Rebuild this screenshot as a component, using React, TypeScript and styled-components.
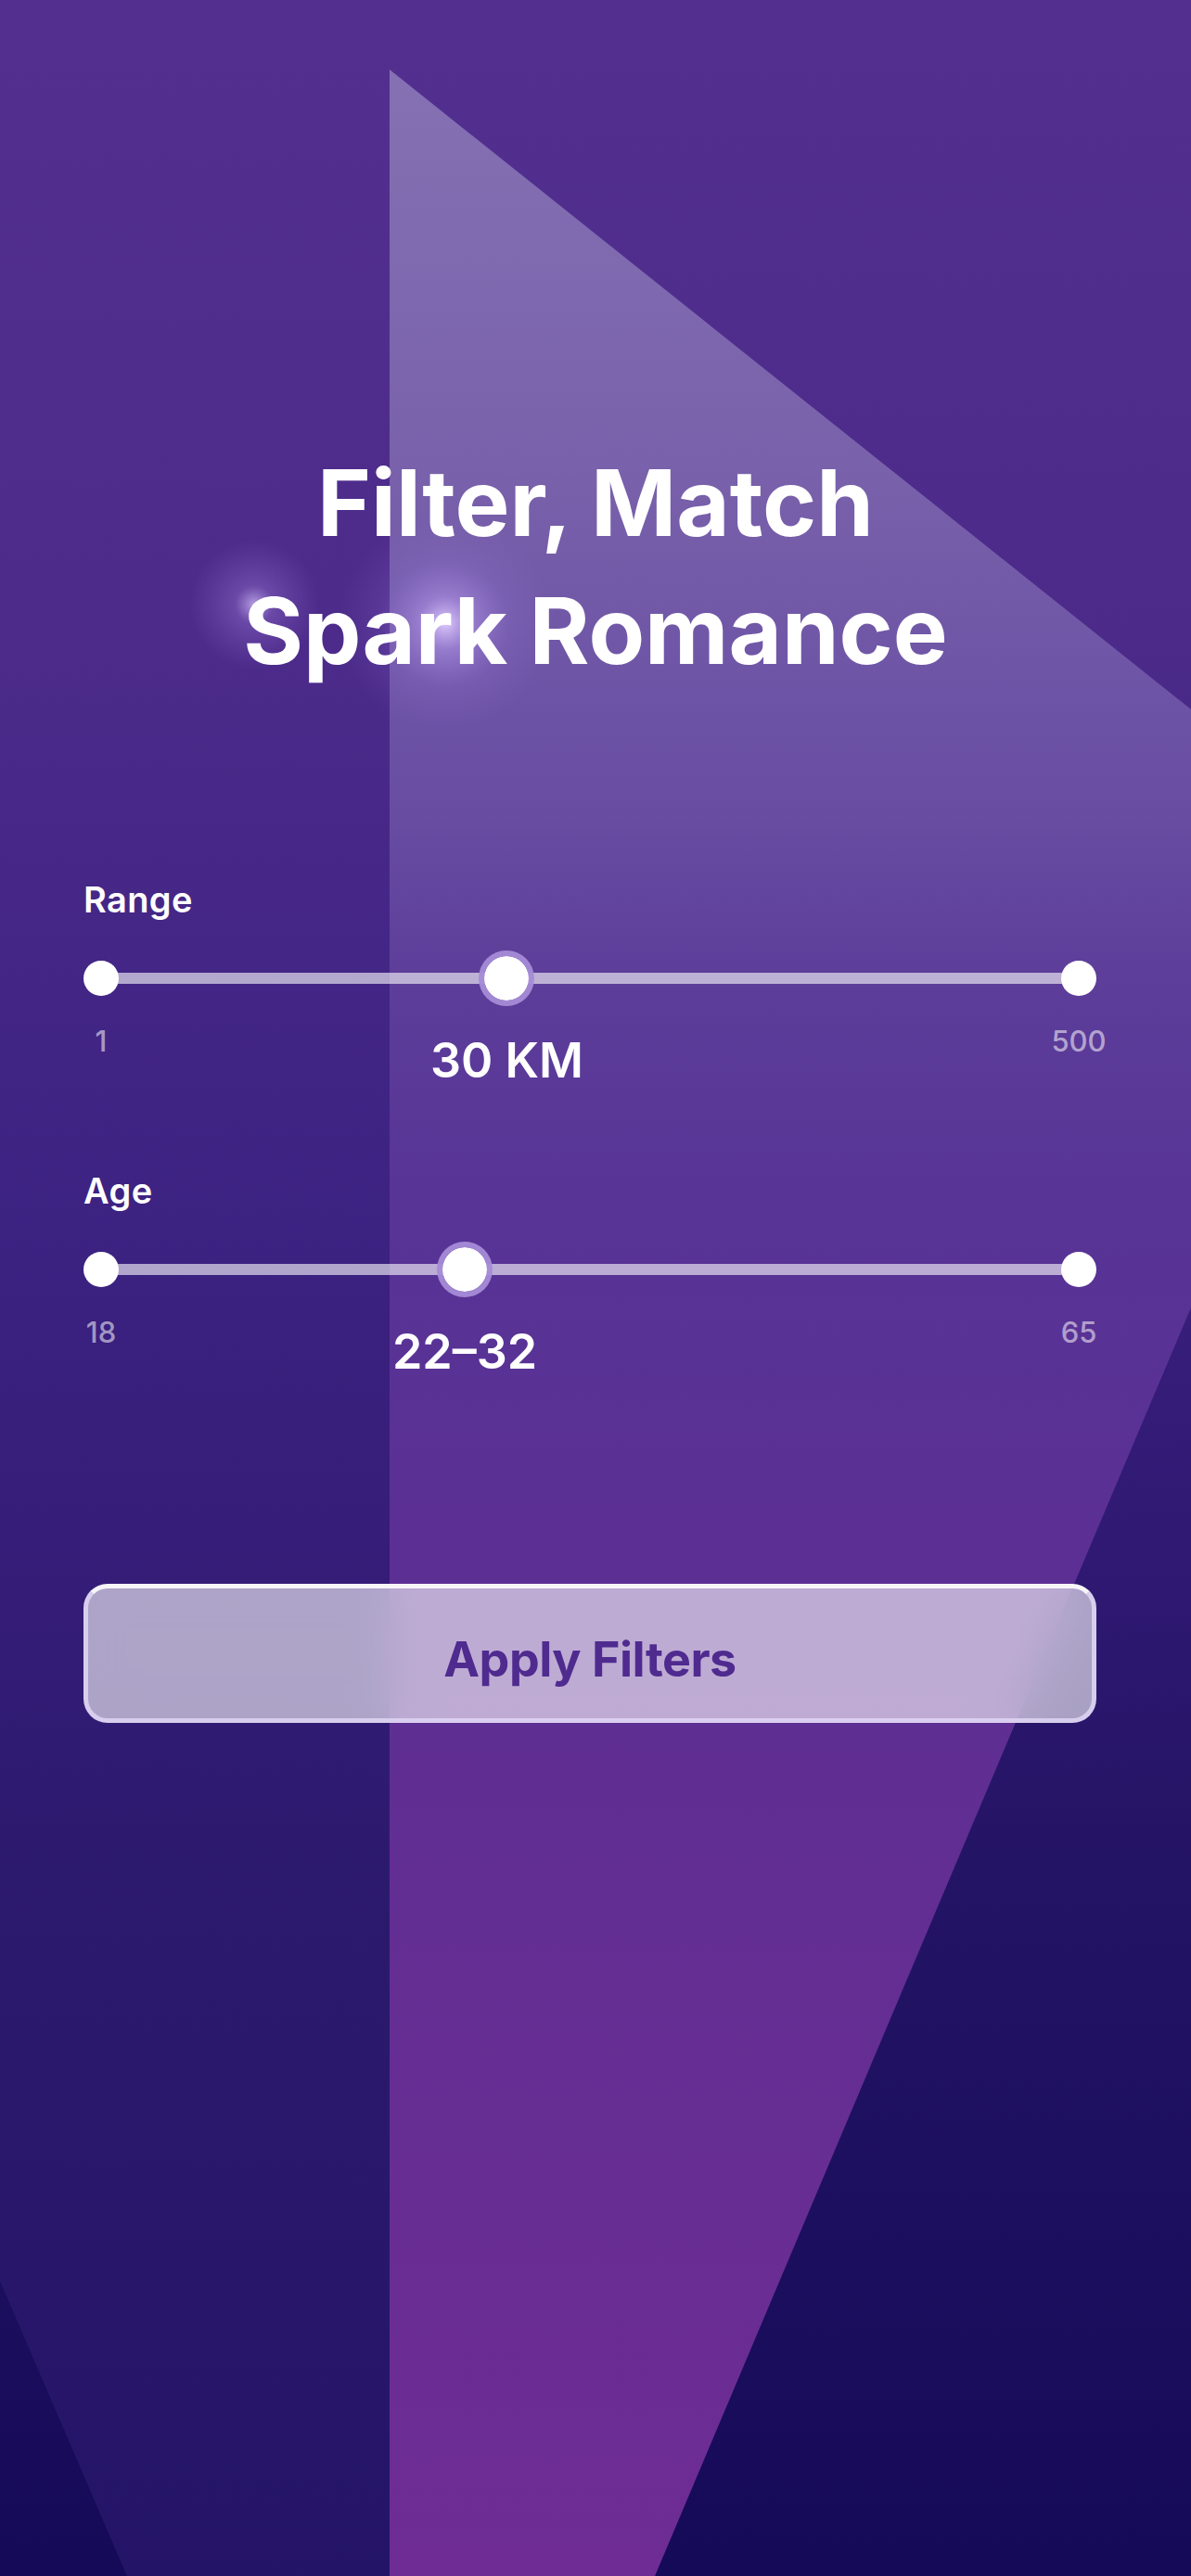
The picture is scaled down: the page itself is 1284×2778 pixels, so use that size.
import * as React from "react";
import styled, { createGlobalStyle } from "styled-components";

type SliderData = {
  label: string;
  min: string;
  max: string;
  value: string;
  pos: number;
};

const sliders: SliderData[] = [
  { label: "Range", min: "1", max: "500", value: "30 KM", pos: 0.415 },
  { label: "Age", min: "18", max: "65", value: "22–32", pos: 0.372 },
];

const GlobalStyle = createGlobalStyle`
  html, body {
    margin: 0;
    padding: 0;
    background: #150a58;
  }
  * {
    box-sizing: border-box;
  }
`;

const Backdrop = () => (
  <BackdropSvg viewBox="0 0 1284 2778" preserveAspectRatio="none">
    <defs>
      <linearGradient id="beamMain" x1="0" y1="75" x2="0" y2="2778" gradientUnits="userSpaceOnUse">
        <stop offset="0" stopColor="#8571b3" />
        <stop offset="0.16" stopColor="#7961ab" />
        <stop offset="0.3" stopColor="#674ca2" />
        <stop offset="0.36" stopColor="#5d3e9a" />
        <stop offset="0.45" stopColor="#573496" />
        <stop offset="0.6" stopColor="#5c2f94" />
        <stop offset="0.72" stopColor="#622e93" />
        <stop offset="1" stopColor="#6e2c94" />
      </linearGradient>
      <linearGradient id="beamLeft" x1="0" y1="0" x2="0" y2="2778" gradientUnits="userSpaceOnUse">
        <stop offset="0" stopColor="#8a5ad2" stopOpacity="0" />
        <stop offset="0.4" stopColor="#8a5ad2" stopOpacity="0.03" />
        <stop offset="1" stopColor="#8a5ad2" stopOpacity="0.13" />
      </linearGradient>
      <radialGradient id="glowBig">
        <stop offset="0" stopColor="#e2d0ff" stopOpacity="0.95" />
        <stop offset="0.25" stopColor="#bda0f4" stopOpacity="0.5" />
        <stop offset="0.6" stopColor="#a283e6" stopOpacity="0.15" />
        <stop offset="1" stopColor="#9c7ae0" stopOpacity="0" />
      </radialGradient>
      <radialGradient id="glowSmall">
        <stop offset="0" stopColor="#dcc8ff" stopOpacity="0.75" />
        <stop offset="0.3" stopColor="#ad8de8" stopOpacity="0.3" />
        <stop offset="1" stopColor="#9c7ae0" stopOpacity="0" />
      </radialGradient>
    </defs>
    <polygon points="0,0 420,0 420,2778 137,2778 0,2460" fill="url(#beamLeft)" />
    <polygon points="420,75 1284,765 1284,1410 706,2778 420,2778" fill="url(#beamMain)" />
    <circle cx="480" cy="672" r="115" fill="url(#glowBig)" />
    <circle cx="274" cy="652" r="70" fill="url(#glowSmall)" />
  </BackdropSvg>
);

const Slider = ({ data }: { data: SliderData }) => {
  const center = `calc(19px + ${data.pos} * (100% - 38px))`;
  return (
    <SliderBlock>
      <SliderLabel>{data.label}</SliderLabel>
      <Track>
        <RailRow>
          <EndDot />
          <Rail />
          <EndDot />
        </RailRow>
        <Thumb style={{ marginLeft: `calc(${center} - 30px)` }} />
      </Track>
      <Scale>
        <Ticks>
          <Tick>
            <span>{data.min}</span>
          </Tick>
          <Tick>
            <span>{data.max}</span>
          </Tick>
        </Ticks>
        <Value style={{ marginLeft: center }}>{data.value}</Value>
      </Scale>
    </SliderBlock>
  );
};

const App = () => {
  return (
    <>
      <GlobalStyle />
      <Page>
        <Backdrop />
        <Content>
          <Title>
            Filter, Match
            <br />
            Spark Romance
          </Title>
          {sliders.map((s) => (
            <Slider key={s.label} data={s} />
          ))}
          <ApplyButton>Apply Filters</ApplyButton>
        </Content>
      </Page>
    </>
  );
};

export default App;

const Page = styled.main`
  position: relative;
  width: 1284px;
  min-height: 2778px;
  overflow: hidden;
  background: linear-gradient(
    180deg,
    #53308f 0%,
    #4b2a89 25%,
    #3b2180 45%,
    #2e1871 62%,
    #241465 72%,
    #150a58 100%
  );
  font-family: Inter, "Noto Sans", sans-serif;
  color: #fff;
`;

const BackdropSvg = styled.svg`
  position: absolute;
  inset: 0;
  width: 100%;
  height: 100%;
  z-index: 0;
`;

const Content = styled.div`
  position: relative;
  z-index: 1;
  display: flex;
  flex-direction: column;
  padding: 473px 102px 0 90px;
`;

const Title = styled.h1`
  margin: 0 -102px 199px -90px;
  font-size: 99px;
  font-weight: 700;
  line-height: 138px;
  letter-spacing: 0;
  text-align: center;
`;

const SliderBlock = styled.section`
  display: flex;
  flex-direction: column;
  margin-bottom: 87px;

  &:last-of-type {
    margin-bottom: 219px;
  }
`;

const SliderLabel = styled.div`
  font-size: 38px;
  font-weight: 600;
  line-height: 44px;
  letter-spacing: 0.4px;
  margin-bottom: 33px;
`;

const Track = styled.div`
  display: grid;
  height: 60px;
  margin-bottom: 21px;

  > * {
    grid-area: 1 / 1;
  }
`;

const RailRow = styled.div`
  display: flex;
  align-items: center;
`;

const EndDot = styled.div`
  width: 38px;
  height: 38px;
  border-radius: 50%;
  background: #fff;
  flex-shrink: 0;
`;

const Rail = styled.div`
  flex: 1;
  height: 12px;
  margin: 0 -2px;
  background: rgba(255, 255, 255, 0.6);
`;

const Thumb = styled.div`
  justify-self: start;
  width: 60px;
  height: 60px;
  border-radius: 50%;
  background: #fff;
  border: 6px solid rgba(165, 140, 215, 0.95);
  background-clip: padding-box;
`;

const Scale = styled.div`
  display: grid;
  height: 69px;

  > * {
    grid-area: 1 / 1;
  }
`;

const Ticks = styled.div`
  display: flex;
  justify-content: space-between;
  align-self: start;
`;

const Tick = styled.div`
  width: 38px;
  display: flex;
  justify-content: center;
  font-size: 31px;
  font-weight: 500;
  line-height: 34px;
  color: rgba(255, 255, 255, 0.55);
  white-space: nowrap;
`;

const Value = styled.div`
  justify-self: start;
  align-self: start;
  margin-top: 7px;
  transform: translateX(-50%);
  font-size: 52px;
  font-weight: 600;
  line-height: 62px;
  white-space: nowrap;
`;

const ApplyButton = styled.button`
  height: 150px;
  width: 100%;
  padding: 12px 0 0;
  border-radius: 26px;
  border: 5px solid rgba(225, 215, 245, 0.85);
  border-top-color: rgba(250, 248, 250, 0.97);
  background: rgba(255, 255, 255, 0.6);
  backdrop-filter: blur(24px);
  font-family: Inter, "Noto Sans", sans-serif;
  font-size: 52px;
  font-weight: 700;
  letter-spacing: -0.5px;
  color: #4f2b8f;
  cursor: pointer;
`;
